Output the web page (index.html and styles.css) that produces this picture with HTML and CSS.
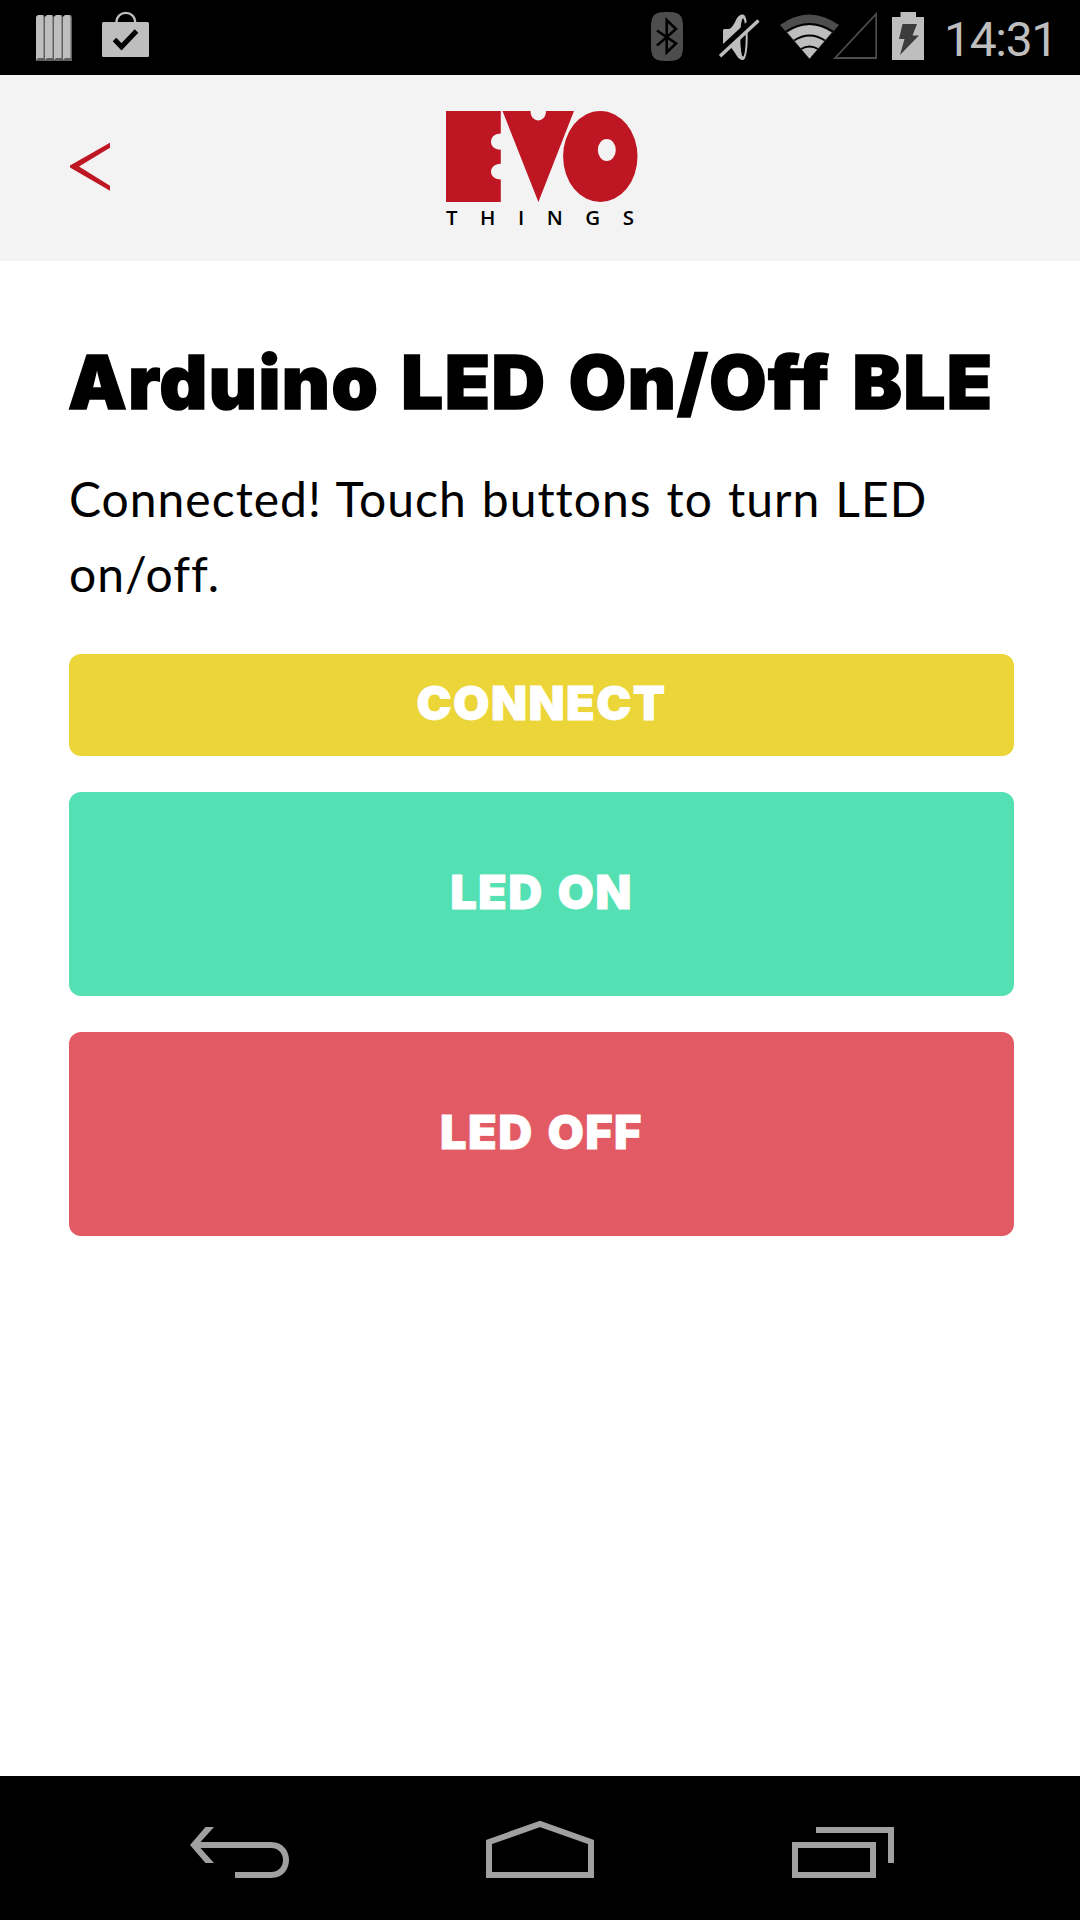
FILE: index.html
```html
<!DOCTYPE html>
<html lang="en">
<head>
<meta charset="utf-8">
<title>Arduino LED On/Off BLE</title>
<link rel="stylesheet" href="styles.css">
</head>
<body>
<div class="status">
  <svg class="stripes" width="36" height="75" viewBox="36 0 36 75">
    <g fill="#606060"><path d="M38 15h6l1 2v44h-9V17zM47 15h6l1 2v44h-9V17zM56 15h6l1 2v44h-9V17zM65 15h6l1 2v44h-9V17z"/></g>
    <g fill="#bebebe"><path d="M38 15h4.500l1 2v41H38l-2 2V17zM47 15h4.500l1 2v41H47l-2 2V17zM56 15h4.500l1 2v41H56l-2 2V17zM65 15h4.500l1 2v41H65l-2 2V17z"/></g>
  </svg>
  <svg class="bag" width="47" height="75" viewBox="102 0 47 75">
    <rect x="102" y="22" width="47" height="35" rx="1.500" fill="#bebebe"/>
    <path d="M116.300 23C116.300 9.500 135.300 9.500 135.300 23" fill="none" stroke="#bebebe" stroke-width="2.200"/>
    <path d="M114.500 39.500l7 7.300 15-15.800" fill="none" stroke="#000" stroke-width="5"/>
  </svg>
  <svg class="bluetooth" width="32" height="75" viewBox="651 0 32 75">
    <path d="M667 12c13 0 16 3 16 16v17c0 13-3 16-16 16s-16-3-16-16V28c0-13 3-16 16-16z" fill="#4d4d4d"/>
    <path d="M657 30.500l19 13-9.300 9V20l9.300 9-19 16.500" fill="none" stroke="#000" stroke-width="2.600"/>
  </svg>
  <svg class="mute" width="41" height="75" viewBox="719 0 41 75">
    <path d="M723 31c0-2 1-2 3-2h3c3-1 5-5 7-9 2-4 4-5.500 7-5.500 3.500 0 4.700 11 4.700 23S746 60 743 60c-3 0-5-2-8-7l-5-7h-4c-2 0-3-1-3-3z" fill="#bebebe"/>
    <ellipse cx="743" cy="37.500" rx="2.700" ry="19" fill="#000"/>
    <path d="M718 54l39-36" stroke="#000" stroke-width="8"/>
    <path d="M720 56.200L758.500 20.500" stroke="#bebebe" stroke-width="3.400"/>
  </svg>
  <svg class="wifi" width="60" height="75" viewBox="780 0 60 75">
    <path d="M780 25q29-21 59 0L809.500 59z" fill="#4d4d4d"/>
    <path d="M787.500 32.500q22-15 44 0L809.500 58.500z" fill="#bebebe"/>
    <g fill="none" stroke="#000" stroke-width="2"><path d="M786 31.500q23.500-15 47 0M794 40.500q15.500-10 31 0M801 49q8.500-5 17 0"/></g>
  </svg>
  <svg class="signal" width="44" height="75" viewBox="833 0 44 75">
    <path d="M835 58L876.200 14v44z" fill="none" stroke="#4d4d4d" stroke-width="1.800"/>
  </svg>
  <svg class="battery" width="32" height="75" viewBox="892 0 32 75">
    <path d="M892 17h8.500v-5H916v5h8v43h-32z" fill="#bebebe"/>
    <path d="M902.500 24H917l-4.500 11.500H919L900 55l4.500-16H899z" fill="#3c3c3c"/>
  </svg>
  <span class="clock">14:31</span>
</div>
<header class="header">
  <svg class="back" width="40" height="48" viewBox="70 143 40 48">
    <path d="M110 142.700v5L79 166.500l31 19.300v5L70 167.500v-2z" fill="#be1622"/>
  </svg>
  <div class="logo">
    <svg width="192" height="91" viewBox="446 111 192 91">
      <g fill="#be1622">
        <path d="M446 111h54.800v22.500c-13 0-13 16.300 0 16.300v14c-13 0-13 15.700 0 15.700V202H446z"/>
        <path d="M502.500 111h28c0 12.500 15.500 12.500 15.500 0h28l-35.600 91z"/>
        <ellipse cx="600.300" cy="156.500" rx="37.200" ry="45.500"/>
      </g>
      <ellipse cx="606.800" cy="150" rx="9" ry="11" fill="#f3f3f3"/>
    </svg>
    <div class="things"><span>T</span><span>H</span><span>I</span><span>N</span><span>G</span><span>S</span></div>
  </div>
</header>
<main class="page">
  <h1 class="title">Arduino LED On/Off BLE</h1>
  <p class="info">Connected! Touch buttons to turn LED on/off.</p>
  <div class="buttons">
    <button class="btn yellow">CONNECT</button>
    <button class="btn green">LED ON</button>
    <button class="btn red">LED OFF</button>
  </div>
</main>
<nav class="nav">
  <svg width="100" height="58" viewBox="190 1820 100 58">
    <path d="M205.500 1827h8.500l-13.500 15H271c24 0 24 36 0 36h-36v-6h36c16 0 16-24 0-24H200.500l13.500 15h-8.500L190 1845z" fill="#a0a0a0"/>
  </svg>
  <svg class="home" width="108" height="58" viewBox="486 1820 108 58">
    <path d="M489 1875v-33l51-18 51 18v33z" fill="none" stroke="#a0a0a0" stroke-width="6"/>
  </svg>
  <svg width="102" height="58" viewBox="792 1820 102 58">
    <path d="M795 1845h78v30h-78zM816 1830h75v33" fill="none" stroke="#a0a0a0" stroke-width="6"/>
  </svg>
</nav>
</body>
</html>
```
FILE: styles.css
```css
* { box-sizing: border-box; }
body {
  margin: 0;
  height: 1920px;
  display: flex;
  flex-direction: column;
  background: #fff;
  color: #000;
  overflow: hidden;
}
svg { display: block; flex: none; }

.status {
  display: flex;
  height: 75px;
  padding: 0 23px 0 36px;
  background: #000;
}
.bag { margin-left: 30px; }
.bluetooth { margin-left: auto; }
.mute { margin-left: 36px; }
.wifi { margin-left: 20px; }
.signal { margin-left: -7px; }
.battery { margin-left: 15px; }
.clock {
  width: 133px;
  text-align: right;
  font: 400 48px/79px Roboto, sans-serif;
  letter-spacing: -1.300px;
  color: #bebebe;
}

.header {
  display: grid;
  grid-template-columns: 1fr 192px 1fr;
  height: 186px;
  padding: 36px 68px 0 70px;
  background: #f3f3f3;
}
.back { margin-top: 32px; }
.logo {
  width: 192px;
  margin-left: 1px;
}
.things {
  display: flex;
  justify-content: space-between;
  width: 188px;
  font: 600 20.500px/31px "Open Sans", "Noto Sans", sans-serif;
}

.page {
  flex: 1;
  padding: 79px 66px 0 69px;
}
.title {
  margin: 0 0 0 -1px;
  font: 900 74px/84px Inter, sans-serif;
  letter-spacing: 1.500px;
  word-spacing: 6px;
  -webkit-text-stroke: 1.600px #000;
  white-space: nowrap;
}
.info {
  margin: 37px 0 0;
  font: 400 48px/75px Lato, sans-serif;
  letter-spacing: 1px;
  word-spacing: 1.800px;
}
.buttons {
  display: flex;
  flex-direction: column;
  gap: 36px;
  margin-top: 43px;
}
.btn {
  height: 204px;
  padding: 0 0 5px;
  border: 0;
  border-radius: 12px;
  color: #fff;
  font: 900 47px/60px Inter, sans-serif;
  letter-spacing: 1.400px;
  word-spacing: 3px;
  -webkit-text-stroke: 0.800px #fff;
}
.yellow { height: 102px; background: #ebd538; }
.green { background: #55e0b4; }
.red { background: #e25a64; }

.nav {
  display: flex;
  justify-content: space-between;
  height: 144px;
  padding: 44px 186px 0 190px;
  background: #000;
}
.home { margin-left: -2px; }
```
